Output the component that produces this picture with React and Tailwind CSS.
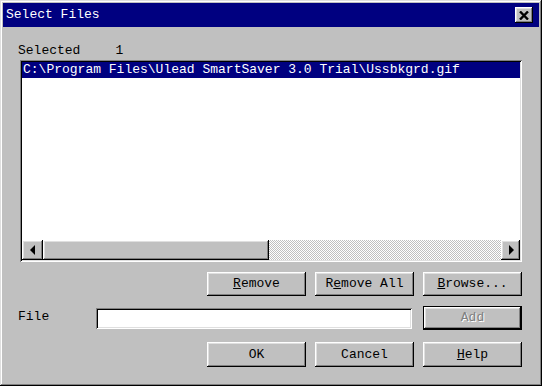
import React from "react";

const raised =
  "shadow-[inset_-1px_-1px_#000,inset_1px_1px_#fff,inset_-2px_-2px_#808080,inset_2px_2px_#dfdfdf]";
const sunken =
  "shadow-[inset_1px_1px_#808080,inset_-1px_-1px_#fff,inset_2px_2px_#000,inset_-2px_-2px_#dfdfdf]";

function Button({ children, className = "" }) {
  return (
    <div
      className={`w-[99px] h-full flex items-center justify-center bg-[#c0c0c0] ${raised} ${className}`}
    >
      {children}
    </div>
  );
}

function Arrow({ dir }) {
  return (
    <svg width="6" height="10" viewBox="0 0 6 10">
      {dir === "left" ? (
        <polygon points="5,0 5,10 0,5" fill="#000" />
      ) : (
        <polygon points="1,0 1,10 6,5" fill="#000" />
      )}
    </svg>
  );
}

export default function App() {
  return (
    <div className="w-[542px] h-[386px] bg-[#c0c0c0] p-[3px] flex flex-col font-['Liberation_Mono',monospace] text-[13px] leading-[16px] text-black shadow-[inset_-1px_-1px_#000,inset_1px_1px_#dfdfdf,inset_-2px_-2px_#808080,inset_2px_2px_#fff]">
      {/* title bar */}
      <div className="h-[24px] bg-[#000080] flex items-center justify-between pl-[3px] pr-[6px] text-white">
        <span>Select Files</span>
        <div className={`w-[18px] h-[16px] bg-[#c0c0c0] flex items-center justify-center ${raised}`}>
          <svg width="10" height="9" viewBox="0 0 10 9">
            <path d="M1 0.5 L9 8.5 M9 0.5 L1 8.5" stroke="#000" strokeWidth="2.4" />
          </svg>
        </div>
      </div>

      <div className="flex-1 flex flex-col pl-[15px] pr-[17px]">
        <div className="mt-[16px] h-[16px] flex">
          <span>Selected</span>
          <span className="ml-[35px]">1</span>
        </div>

        {/* list box */}
        <div className={`mt-[1px] ml-[2px] h-[202px] bg-white p-[2px] flex flex-col ${sunken}`}>
          <div className="flex-1">
            <div className="h-[16px] bg-[#000080] text-white pl-[1px] whitespace-pre">
              C:\Program Files\Ulead SmartSaver 3.0 Trial\Ussbkgrd.gif
            </div>
          </div>
          <div className="h-[20px] flex">
            <div className={`w-[21px] bg-[#c0c0c0] flex items-center justify-center ${raised}`}>
              <Arrow dir="left" />
            </div>
            <div className={`w-[226px] bg-[#c0c0c0] ${raised}`} />
            <div className="flex-1 bg-[repeating-conic-gradient(#c0c0c0_0_25%,#fff_0_50%)] bg-[length:2px_2px]" />
            <div className={`w-[19px] bg-[#c0c0c0] flex items-center justify-center ${raised}`}>
              <Arrow dir="right" />
            </div>
          </div>
        </div>

        <div className="mt-[10px] h-[24px] flex justify-end gap-[9px]">
          <Button>
            <span><u>R</u>emove</span>
          </Button>
          <Button>
            <span>R<u>e</u>move All</span>
          </Button>
          <Button>
            <span><u>B</u>rowse...</span>
          </Button>
        </div>

        <div className="mt-[10px] h-[24px] flex items-center">
          <span className="w-[78px] mt-[-2px]">File</span>
          <div className={`w-[316px] h-[21px] bg-white ${sunken}`} />
          <div className="ml-[11px] w-[99px] h-[24px] border border-black">
            <div className={`w-full h-full flex items-center justify-center ${raised} text-[#808080] [text-shadow:1px_1px_#fff]`}>
              <span>Add</span>
            </div>
          </div>
        </div>

        <div className="mt-[12px] h-[25px] flex justify-end gap-[9px]">
          <Button>OK</Button>
          <Button>Cancel</Button>
          <Button>
            <span><u>H</u>elp</span>
          </Button>
        </div>
      </div>
    </div>
  );
}
